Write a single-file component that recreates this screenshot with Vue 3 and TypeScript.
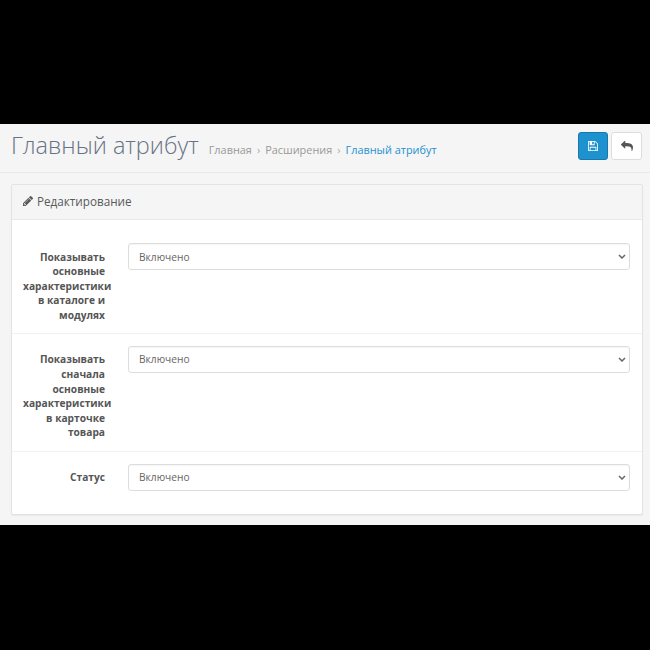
<script setup lang="ts">
// Module settings form: black letterbox bands around an admin page.
const crumbs = ["Главная", "Расширения"];

const fields = [
  { label: "Показывать основные характеристики в каталоге и модулях", value: "Включено" },
  { label: "Показывать сначала основные характеристики в карточке товара", value: "Включено" },
  { label: "Статус", value: "Включено" },
];
</script>

<template>
  <div class="frame">
    <div class="page">
      <header class="page-header">
        <h1>Главный атрибут</h1>
        <nav class="crumbs">
          <template v-for="c in crumbs" :key="c">
            <a>{{ c }}</a>
            <span class="sep">›</span>
          </template>
          <a class="current">Главный атрибут</a>
        </nav>
        <div class="actions">
          <button class="btn primary" type="button" aria-label="Сохранить">
            <svg viewBox="0 0 1536 1536" width="10" height="10">
              <path fill="currentColor" d="M384 1408h768v-384H384v384zm896 0h128V512q0-14-10-38.500T1378 440l-281-281q-10-10-34-20t-39-10v416q0 40-28 68t-68 28H352q-40 0-68-28t-28-68V128H128v1280h128V992q0-40 28-68t68-28h832q40 0 68 28t28 68v416zM896 480V160q0-13-9.500-22.500T864 128H672q-13 0-22.500 9.500T640 160v320q0 13 9.500 22.500T672 512h192q13 0 22.500-9.500T896 480zm640 32v928q0 40-28 68t-68 28H96q-40 0-68-28t-28-68V96q0-40 28-68T96 0h928q40 0 88 20t76 48l280 280q28 28 48 76t20 88z"/>
            </svg>
          </button>
          <button class="btn back" type="button" aria-label="Назад">
            <svg viewBox="0 0 1792 1536" width="12" height="11">
              <path fill="currentColor" d="M1792 1120q0 166-127 451-3 7-10.500 24t-13.500 30-13 22q-12 17-28 17-15 0-23.500-10t-8.500-25q0-9 2.500-26.500t2.500-23.500q5-68 5-123 0-101-17.500-181t-48.500-138.500-80-101-105.500-69.500-133-42.500-154-21.500T864 896H640v256q0 26-19 45t-45 19-45-19L19 685Q0 666 0 640t19-45L531 83q19-19 45-19t45 19 19 45v256h224q713 0 875 403 53 134 53 333z"/>
            </svg>
          </button>
        </div>
      </header>

      <section class="panel">
        <div class="panel-head">
          <svg class="pencil" viewBox="0 0 1515 1515" width="10" height="10">
            <path fill="currentColor" d="M363 1387l91-91-235-235-91 91v107h128v128h107zm523-928q0-22-22-22-10 0-17 7L305 986q-7 7-7 17 0 22 22 22 10 0 17-7l542-542q7-7 7-17zm-54-192l416 416-832 832H0v-416zm683 96q0 53-37 90l-166 166-416-416 166-165q36-38 90-38 53 0 91 38l235 234q37 39 37 91z"/>
          </svg>
          Редактирование
        </div>
        <div v-for="f in fields" :key="f.label" class="row">
          <label class="row-label">{{ f.label }}</label>
          <div class="control-wrap">
            <select class="control">
              <option>{{ f.value }}</option>
              <option>Отключено</option>
            </select>
            <svg class="chevron" viewBox="0 0 8 5" width="8" height="5">
              <path d="M1 1l3 3 3-3" fill="none" stroke="currentColor" stroke-width="1.500"/>
            </svg>
          </div>
        </div>
      </section>
    </div>
  </div>
</template>

<style scoped>
.frame {
  width: 650px;
  height: 650px;
  padding: 124px 0 125px;
  box-sizing: border-box;
  background: #000;
  font-family: "Open Sans", sans-serif;
  font-size: 12px;
  color: #666;
}

.page {
  height: 100%;
  background: #f5f5f5;
  overflow: hidden;
}

.page-header {
  height: 49px;
  box-sizing: border-box;
  border-bottom: 1px solid #e8e8e8;
  display: flex;
  align-items: center;
  padding: 0 8px 0 11px;
}

h1 {
  margin: 0 0 6px;
  font-size: 23.500px;
  font-weight: 300;
  line-height: 40px;
  color: #657384;
}

.crumbs {
  margin-left: 10px;
  padding-top: 2px;
  color: #999;
  font-size: 10.900px;
  display: flex;
  gap: 5px;
}

.crumbs .current {
  color: #1e91cf;
}

.sep {
  color: #aaa;
}

.actions {
  margin-left: auto;
  display: flex;
  gap: 3px;
  padding-bottom: 5px;
}

.btn {
  width: 30px;
  height: 28px;
  padding: 0;
  display: flex;
  align-items: center;
  justify-content: center;
  border: 1px solid #ddd;
  border-radius: 3px;
  background: #fff;
  color: #555;
}

.btn.back {
  width: 31px;
}

.btn.primary {
  background: #1e91cf;
  border-color: #1978ab;
  color: #fff;
}

.panel {
  margin: 11px 7px 0 11px;
  background: #fff;
  border: 1px solid #e3e3e3;
  border-radius: 2px;
  box-shadow: 0 1px 1px rgba(0, 0, 0, 0.05);
}

.panel-head {
  height: 35px;
  box-sizing: border-box;
  padding: 0 11px 2px;
  display: flex;
  align-items: center;
  gap: 4px;
  background: #f5f5f5;
  border-bottom: 1px solid #e8e8e8;
  font-size: 11.700px;
  color: #595959;
}

.pencil {
  flex: none;
}

.row {
  display: flex;
  align-items: flex-start;
  padding: 12px 12px 10.500px 0;
  border-bottom: 1px solid #f1f1f1;
}

.panel-head + .row {
  padding-top: 23px;
}

.row:last-child {
  border-bottom: 0;
  padding-bottom: 23px;
}

.row-label {
  width: 82px;
  margin-left: 11px;
  padding-top: 6.500px;
  text-align: right;
  font-size: 10.200px;
  font-weight: 700;
  line-height: 14.600px;
  color: #555;
  flex: none;
}

.control-wrap {
  position: relative;
  flex: 1;
  min-width: 0;
  margin-left: 23px;
  color: #666;
}

.control {
  display: block;
  width: 100%;
  height: 27px;
  padding: 0 10px;
  appearance: none;
  background: #fff;
  border: 1px solid #ddd;
  border-radius: 3px;
  box-shadow: inset 0 1px 1px rgba(0, 0, 0, 0.04);
  font: 10.200px "Open Sans", sans-serif;
  color: #666;
}

.chevron {
  position: absolute;
  top: 11px;
  right: 4px;
  pointer-events: none;
}
</style>

<style>
html, body {
  margin: 0;
  background: #000;
}
</style>
